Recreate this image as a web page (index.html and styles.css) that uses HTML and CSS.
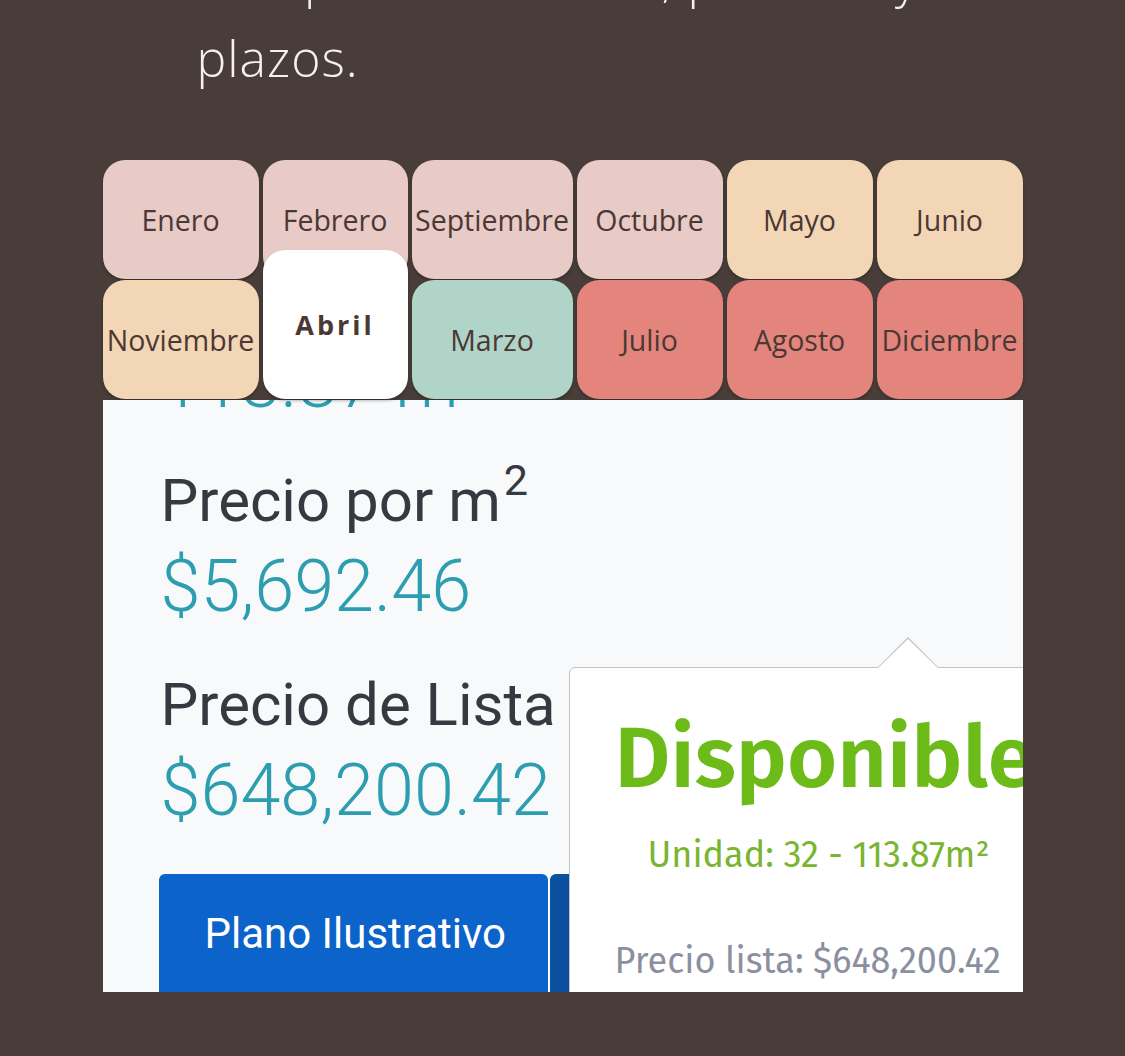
FILE: index.html
```html
<!DOCTYPE html>
<html lang="es">
<head>
    <meta charset="UTF-8">
    <meta name="viewport" content="width=device-width, initial-scale=1.0">
    <title>Unidad 32</title>
    <link rel="stylesheet" href="styles.css">
</head>
<body>
    <div class="container">
        <p class="intro">Compra de contado, por mes y<br>plazos.</p>

        <div class="months">
            <div class="month pink">Enero</div>
            <div class="month pink">Febrero</div>
            <div class="month pink">Septiembre</div>
            <div class="month pink">Octubre</div>
            <div class="month peach">Mayo</div>
            <div class="month peach">Junio</div>
            <div class="month peach">Noviembre</div>
            <div class="month active">Abril</div>
            <div class="month mint">Marzo</div>
            <div class="month salmon">Julio</div>
            <div class="month salmon">Agosto</div>
            <div class="month salmon">Diciembre</div>
        </div>

        <div class="panel">
            <div class="panel-body">
                <div class="price cut">113.87 m<sup>2</sup></div>

                <h2>Precio por m<sup>2</sup></h2>
                <div class="price">$5,692.46</div>

                <h2>Precio de Lista</h2>
                <div class="price">$648,200.42</div>

                <div class="actions">
                    <button class="btn">Plano Ilustrativo</button>
                    <button class="btn dark">Apartar</button>
                </div>
            </div>

            <div class="popover">
                <div class="status">Disponible</div>
                <div class="unit">Unidad: 32 - 113.87m²</div>
                <div class="list-price">Precio lista: $648,200.42</div>
            </div>
        </div>
    </div>
</body>
</html>
```

FILE: styles.css
```css
body {
    margin: 0;
    background-color: #483d38;
    font-family: "Open Sans", Arial, sans-serif;
    overflow: hidden;
}

.container {
    width: 920px;
    margin: 0 auto;
}

.intro {
    margin: -62px 0 62px;
    padding-left: 94px;
    font-size: 50px;
    font-weight: 300;
    letter-spacing: 1px;
    line-height: 80px;
    color: #f6f1ef;
    white-space: nowrap;
}

/* month selector */
.months {
    display: grid;
    grid-template-columns: 156px 145px 161px 146px 146px 146px;
    grid-auto-rows: 119px;
    column-gap: 4px;
    row-gap: 1px;
}

.month {
    display: flex;
    align-items: center;
    justify-content: center;
    border-radius: 22px;
    font-size: 28.5px;
    color: #4b3834;
    box-shadow: 0 2px 3px rgba(0, 0, 0, 0.25);
    white-space: nowrap;
}

.pink { background-color: #e8cac6; }
.peach { background-color: #f3d6b6; }
.mint { background-color: #b0d4c8; }
.salmon { background-color: #e3857d; }

.month.active {
    position: relative;
    z-index: 1;
    margin-top: -30px;
    background-color: #fff;
    font-weight: 700;
    letter-spacing: 3px;
    font-size: 27px;
}

/* detail panel */
.panel {
    position: relative;
    height: 592px;
    margin-top: 1px;
    background-color: #f8f9fa;
    overflow: hidden;
    font-family: Roboto, "Liberation Sans", sans-serif;
}

.panel-body {
    padding-left: 58px;
}

.panel h2 {
    margin: 39px 0 7px;
    font-size: 60px;
    font-weight: 400;
    line-height: 72px;
    color: #343a40;
}

.panel sup {
    margin-left: 3px;
    font-size: 0.72em;
    line-height: 0;
    vertical-align: 0.6em;
}

.price {
    font-size: 72px;
    font-weight: 300;
    line-height: 86px;
    color: #2c9eb0;
}

.price.cut {
    margin-top: -60px;
}

.actions {
    display: flex;
    gap: 2px;
    margin-top: 40px;
    margin-left: -2px;
}

.btn {
    padding: 30px 42px 40px 46px;
    border: none;
    border-radius: 6px;
    background-color: #0c63c9;
    color: #fff;
    font-family: Roboto, "Liberation Sans", sans-serif;
    font-size: 42px;
    line-height: 60px;
    white-space: nowrap;
}

.btn.dark {
    background-color: #0a509f;
}

/* availability popover */
.popover {
    position: absolute;
    left: 466px;
    top: 267px;
    width: 520px;
    height: 400px;
    padding: 44px 0 0 45px;
    background-color: #fff;
    border: 1px solid #c4c4c6;
    border-radius: 6px;
    font-family: "Fira Sans", "Noto Sans", sans-serif;
    box-sizing: border-box;
}

.popover::before,
.popover::after {
    content: "";
    position: absolute;
    left: 307px;
    border-left: 31px solid transparent;
    border-right: 31px solid transparent;
}

.popover::before {
    top: -31px;
    border-bottom: 31px solid #c4c4c6;
}

.popover::after {
    top: -29px;
    border-bottom: 30px solid #fff;
}

.status {
    font-size: 86px;
    font-weight: 600;
    line-height: 1.1;
    color: #6cbb18;
    white-space: nowrap;
}

.unit {
    margin-top: 26px;
    padding-left: 33px;
    font-size: 36px;
    color: #79b531;
    white-space: nowrap;
}

.list-price {
    margin-top: 62px;
    font-size: 36px;
    color: #8b8fa0;
    white-space: nowrap;
}
```
